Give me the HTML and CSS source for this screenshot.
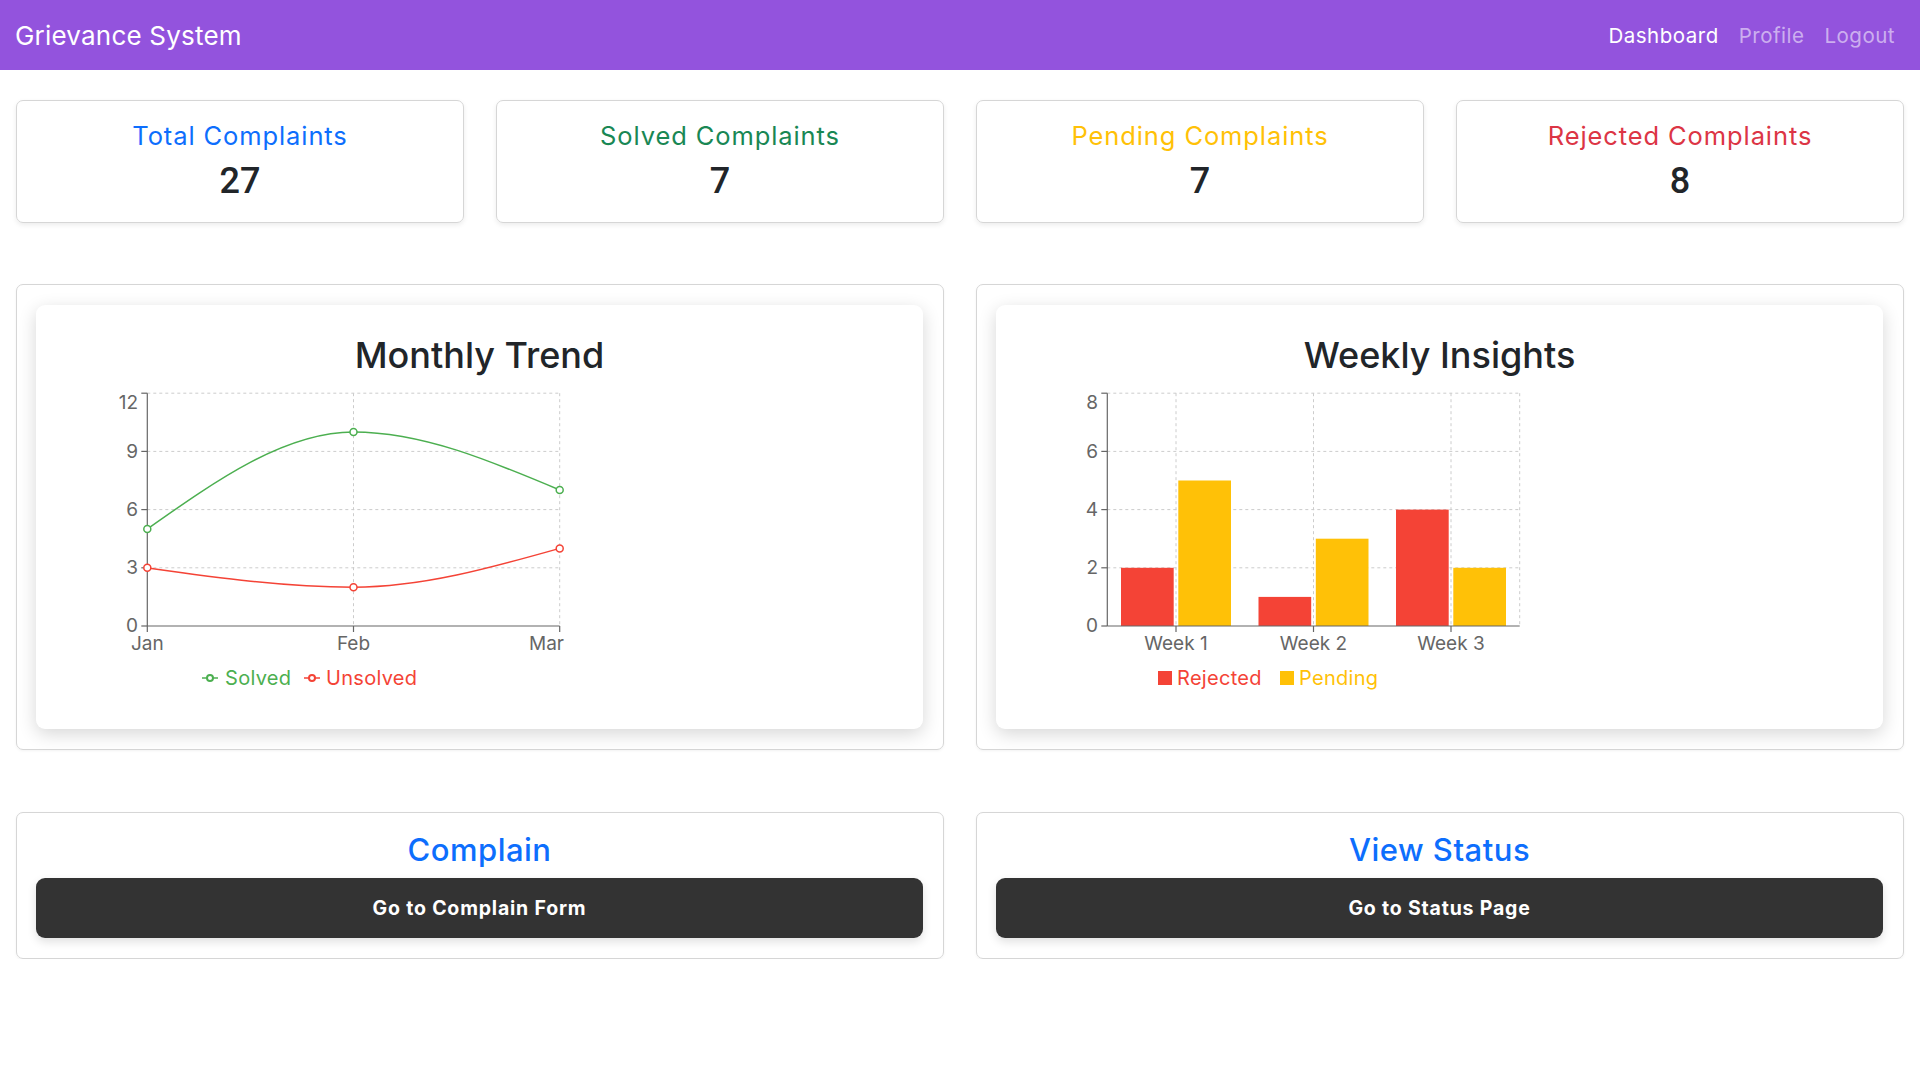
FILE: index.html
```html
<!DOCTYPE html>
<html lang="en">
<head>
<meta charset="utf-8">
<title>Grievance System</title>
<link rel="stylesheet" href="styles.css">
</head>
<body>
<nav class="navbar">
  <span class="brand">Grievance System</span>
  <div class="nav-links">
    <a class="nav-link active">Dashboard</a>
    <a class="nav-link">Profile</a>
    <a class="nav-link">Logout</a>
  </div>
</nav>

<main class="page">
  <section class="stats">
    <div class="stat-card"><h5 class="stat-title c-blue">Total Complaints</h5><div class="stat-num">27</div></div>
    <div class="stat-card"><h5 class="stat-title c-green">Solved Complaints</h5><div class="stat-num">7</div></div>
    <div class="stat-card"><h5 class="stat-title c-yellow">Pending Complaints</h5><div class="stat-num">7</div></div>
    <div class="stat-card"><h5 class="stat-title c-red">Rejected Complaints</h5><div class="stat-num">8</div></div>
  </section>

  <section class="charts">
    <div class="outer-card">
      <div class="chart-card">
        <h3 class="chart-title">Monthly Trend</h3>
        <svg class="chart" width="520" height="315" viewBox="60 385 520 315">
          <g class="grid">
            <line x1="147.3" y1="393.2" x2="559.7" y2="393.2"/>
            <line x1="147.3" y1="451.4" x2="559.7" y2="451.4"/>
            <line x1="147.3" y1="509.6" x2="559.7" y2="509.6"/>
            <line x1="147.3" y1="567.8" x2="559.7" y2="567.8"/>
            <line x1="353.5" y1="393.2" x2="353.5" y2="626"/>
            <line x1="559.7" y1="393.2" x2="559.7" y2="626"/>
          </g>
          <g class="axis">
            <line x1="147.3" y1="393.2" x2="147.3" y2="626"/>
            <line x1="147.3" y1="626" x2="559.7" y2="626"/>
            <line x1="141.3" y1="393.2" x2="147.3" y2="393.2"/>
            <line x1="141.3" y1="451.4" x2="147.3" y2="451.4"/>
            <line x1="141.3" y1="509.6" x2="147.3" y2="509.6"/>
            <line x1="141.3" y1="567.8" x2="147.3" y2="567.8"/>
            <line x1="141.3" y1="626" x2="147.3" y2="626"/>
            <line x1="147.3" y1="626" x2="147.3" y2="632"/>
            <line x1="353.5" y1="626" x2="353.5" y2="632"/>
            <line x1="559.7" y1="626" x2="559.7" y2="632"/>
          </g>
          <g class="tick-label ylab">
            <text x="138" y="408.5">12</text>
            <text x="138" y="458">9</text>
            <text x="138" y="516">6</text>
            <text x="138" y="574">3</text>
            <text x="138" y="632">0</text>
          </g>
          <g class="tick-label">
            <text x="147.3" y="650" text-anchor="middle">Jan</text>
            <text x="353.5" y="650" text-anchor="middle">Feb</text>
            <text x="564" y="650" text-anchor="end">Mar</text>
          </g>
          <path class="line-green" d="M147.3,529 C216.1,480.5 284.7,432 353.5,432 C422.3,432 491,461 559.7,490"/>
          <path class="line-red" d="M147.3,567.8 C216.1,577.5 284.7,587.2 353.5,587.2 C422.3,587.2 491,567.8 559.7,548.4"/>
          <g class="dot-green">
            <circle cx="147.3" cy="529" r="3.5"/>
            <circle cx="353.5" cy="432" r="3.5"/>
            <circle cx="559.7" cy="490" r="3.5"/>
          </g>
          <g class="dot-red">
            <circle cx="147.3" cy="567.8" r="3.5"/>
            <circle cx="353.5" cy="587.2" r="3.5"/>
            <circle cx="559.7" cy="548.4" r="3.5"/>
          </g>
          <g class="legend">
            <line class="line-green" x1="202" y1="678" x2="218" y2="678"/>
            <circle class="dot-green-s" cx="210" cy="678" r="3"/>
            <text class="fill-green" x="225" y="685">Solved</text>
            <line class="line-red" x1="304" y1="678" x2="320" y2="678"/>
            <circle class="dot-red-s" cx="312" cy="678" r="3"/>
            <text class="fill-red" x="326" y="685">Unsolved</text>
          </g>
        </svg>
      </div>
    </div>

    <div class="outer-card">
      <div class="chart-card">
        <h3 class="chart-title">Weekly Insights</h3>
        <svg class="chart" width="520" height="315" viewBox="1020 385 520 315">
          <g class="grid">
            <line x1="1107.3" y1="393.2" x2="1519.7" y2="393.2"/>
            <line x1="1107.3" y1="451.4" x2="1519.7" y2="451.4"/>
            <line x1="1107.3" y1="509.6" x2="1519.7" y2="509.6"/>
            <line x1="1107.3" y1="567.8" x2="1519.7" y2="567.8"/>
            <line x1="1176" y1="393.2" x2="1176" y2="626"/>
            <line x1="1313.5" y1="393.2" x2="1313.5" y2="626"/>
            <line x1="1451" y1="393.2" x2="1451" y2="626"/>
            <line x1="1519.7" y1="393.2" x2="1519.7" y2="626"/>
          </g>
          <g class="bars">
            <rect class="bar-red" x="1121" y="567.8" width="52.7" height="58.2"/>
            <rect class="bar-yellow" x="1178.3" y="480.5" width="52.7" height="145.5"/>
            <rect class="bar-red" x="1258.5" y="596.9" width="52.7" height="29.1"/>
            <rect class="bar-yellow" x="1315.8" y="538.7" width="52.7" height="87.3"/>
            <rect class="bar-red" x="1396" y="509.6" width="52.7" height="116.4"/>
            <rect class="bar-yellow" x="1453.3" y="567.8" width="52.7" height="58.2"/>
          </g>
          <g class="axis">
            <line x1="1107.3" y1="393.2" x2="1107.3" y2="626"/>
            <line x1="1107.3" y1="626" x2="1519.7" y2="626"/>
            <line x1="1101.3" y1="393.2" x2="1107.3" y2="393.2"/>
            <line x1="1101.3" y1="451.4" x2="1107.3" y2="451.4"/>
            <line x1="1101.3" y1="509.6" x2="1107.3" y2="509.6"/>
            <line x1="1101.3" y1="567.8" x2="1107.3" y2="567.8"/>
            <line x1="1101.3" y1="626" x2="1107.3" y2="626"/>
            <line x1="1176" y1="626" x2="1176" y2="632"/>
            <line x1="1313.5" y1="626" x2="1313.5" y2="632"/>
            <line x1="1451" y1="626" x2="1451" y2="632"/>
          </g>
          <g class="tick-label ylab">
            <text x="1098" y="409">8</text>
            <text x="1098" y="458">6</text>
            <text x="1098" y="516">4</text>
            <text x="1098" y="574">2</text>
            <text x="1098" y="632">0</text>
          </g>
          <g class="tick-label">
            <text x="1176" y="650" text-anchor="middle">Week 1</text>
            <text x="1313.5" y="650" text-anchor="middle">Week 2</text>
            <text x="1451" y="650" text-anchor="middle">Week 3</text>
          </g>
          <g class="legend">
            <rect class="bar-red" x="1158" y="671" width="14" height="14"/>
            <text class="fill-red" x="1177" y="685">Rejected</text>
            <rect class="bar-yellow" x="1280" y="671" width="14" height="14"/>
            <text class="fill-yellow" x="1299" y="685">Pending</text>
          </g>
        </svg>
      </div>
    </div>
  </section>

  <section class="actions">
    <div class="action-card">
      <h3 class="action-title">Complain</h3>
      <button class="action-btn">Go to Complain Form</button>
    </div>
    <div class="action-card">
      <h3 class="action-title">View Status</h3>
      <button class="action-btn">Go to Status Page</button>
    </div>
  </section>
</main>
</body>
</html>
```
FILE: styles.css
```css
* { box-sizing: border-box; }

body {
  margin: 0;
  background: #ffffff;
  font-family: "Inter", "Noto Sans", sans-serif;
  color: #212529;
}

/* Navbar */
.navbar {
  height: 70px;
  background: #9353dd;
  display: flex;
  align-items: center;
  justify-content: space-between;
  padding: 0 16px 0 15px;
}
.brand {
  color: #ffffff;
  font-size: 26px;
  font-weight: 400;
  letter-spacing: 0.2px;
}
.nav-links {
  display: flex;
  align-items: center;
}
.nav-link {
  color: rgba(255, 255, 255, 0.55);
  font-size: 20.5px;
  letter-spacing: 0.5px;
  padding: 0 10px;
  text-decoration: none;
}
.nav-link:last-child { padding-right: 9px; }
.nav-link.active { color: #ffffff; }

/* Page */
.page {
  padding: 30px 16px 0;
}

/* Stat cards */
.stats {
  display: grid;
  grid-template-columns: repeat(4, 1fr);
  gap: 32px;
}
.stat-card {
  height: 123px;
  border: 1px solid #d6d6d6;
  border-radius: 7px;
  box-shadow: 0 2px 5px rgba(0, 0, 0, 0.08);
  text-align: center;
  padding-top: 20px;
}
.stat-title {
  margin: 0;
  font-size: 25.5px;
  font-weight: 400;
  letter-spacing: 0.9px;
  line-height: 30px;
}
.stat-num {
  margin-top: 9px;
  font-family: "Roboto", "Inter", sans-serif;
  font-size: 36px;
  font-weight: 500;
  line-height: 43px;
  color: #212529;
}
.c-blue { color: #0d6efd; }
.c-green { color: #198754; }
.c-yellow { color: #ffc107; }
.c-red { color: #dc3545; }

/* Charts */
.charts {
  margin-top: 61px;
  display: grid;
  grid-template-columns: 1fr 1fr;
  gap: 32px;
}
.outer-card {
  border: 1px solid #d6d6d6;
  border-radius: 7px;
  padding: 20px 20px 20px 19px;
  box-shadow: 0 1px 3px rgba(0, 0, 0, 0.05);
}
.chart-card {
  background: #ffffff;
  border-radius: 9px;
  box-shadow: 0 5px 18px rgba(0, 0, 0, 0.16);
  padding: 24px 24px 29px;
}
.chart-title {
  margin: 5px 0 8px;
  text-align: center;
  font-size: 36px;
  font-weight: 500;
  line-height: 43px;
  color: #212529;
}
.chart {
  display: block;
}
.grid line {
  stroke: #cccccc;
  stroke-width: 1;
  stroke-dasharray: 3 3;
}
.axis line {
  stroke: #666666;
  stroke-width: 1.2;
}
.tick-label text {
  font-family: "Inter", sans-serif;
  font-size: 19px;
  fill: #666666;
}
.ylab text { text-anchor: end; }

.line-green { fill: none; stroke: #4caf50; stroke-width: 1.5; }
.line-red { fill: none; stroke: #f44336; stroke-width: 1.5; }
.dot-green circle { fill: #ffffff; stroke: #4caf50; stroke-width: 1.5; }
.dot-red circle { fill: #ffffff; stroke: #f44336; stroke-width: 1.5; }
.dot-green-s { fill: #ffffff; stroke: #4caf50; stroke-width: 2; }
.dot-red-s { fill: #ffffff; stroke: #f44336; stroke-width: 2; }

.bar-red { fill: #f44336; }
.bar-yellow { fill: #ffc107; }

.legend text {
  font-family: "Inter", sans-serif;
  font-size: 20px;
  letter-spacing: 0.3px;
}
.fill-green { fill: #4caf50; }
.fill-red { fill: #f44336; }
.fill-yellow { fill: #ffc107; }

/* Action cards */
.actions {
  margin-top: 62px;
  display: grid;
  grid-template-columns: 1fr 1fr;
  gap: 32px;
}
.action-card {
  border: 1px solid #d6d6d6;
  border-radius: 7px;
  padding: 19px 20px 20px 19px;
  box-shadow: 0 1px 3px rgba(0, 0, 0, 0.05);
  text-align: center;
}
.action-title {
  margin: 0 0 10px;
  font-size: 31px;
  font-weight: 500;
  letter-spacing: 0.5px;
  line-height: 36px;
  color: #0d6efd;
}
.action-btn {
  display: block;
  width: 100%;
  height: 60px;
  border: none;
  border-radius: 9px;
  background: #333333;
  color: #ffffff;
  font-family: "Inter", sans-serif;
  font-size: 19.5px;
  font-weight: 700;
  letter-spacing: 0.8px;
  box-shadow: 0 4px 10px rgba(0, 0, 0, 0.12);
}
```
